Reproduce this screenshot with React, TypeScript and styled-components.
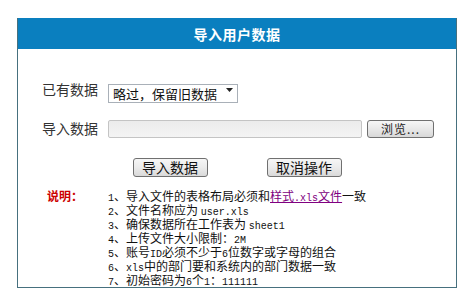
import styled, { createGlobalStyle } from 'styled-components'

const GlobalStyle = createGlobalStyle`
  html, body {
    margin: 0;
    padding: 0;
    background: #ffffff;
  }
  body {
    font-family: "Noto Sans CJK SC", "Liberation Sans", sans-serif;
    color: #222;
  }
`

const Page = styled.div`
  padding: 18px 7px 13px 17px;
`

const Panel = styled.div`
  width: 440px;
  height: 270px;
  box-sizing: border-box;
  border: 1px solid #46707e;
  border-top: none;
  background: #fff;
  display: flex;
  flex-direction: column;
  overflow: hidden;
`

const Header = styled.div`
  flex-shrink: 0;
  height: 31px;
  margin: 0 -1px;
  background: #0a7fbf;
  color: #fff;
  font-size: 14px;
  font-weight: bold;
  display: flex;
  align-items: center;
  justify-content: center;
  letter-spacing: 0.5px;
`

const Body = styled.div`
  padding: 31px 0 0 24px;
  display: flex;
  flex-direction: column;
`

const FormRow = styled.div`
  display: flex;
  align-items: center;
  height: 19px;
  margin-bottom: 20px;
`

const Label = styled.div`
  width: 66px;
  font-size: 14px;
  color: #333;
  line-height: 19px;
`

const SelectWrap = styled.div`
  position: relative;
  width: 130px;
  height: 19px;
`

const Select = styled.select`
  appearance: none;
  width: 100%;
  height: 19px;
  box-sizing: border-box;
  border: 1px solid #a9b0b8;
  background: #fff;
  font-family: inherit;
  font-size: 13px;
  color: #111;
  padding: 0 0 0 4px;
  line-height: 17px;
  outline: none;
`

const Arrow = styled.svg`
  position: absolute;
  right: 5px;
  top: 8px;
  pointer-events: none;
`

const FileInput = styled.div`
  width: 254px;
  height: 18px;
  box-sizing: border-box;
  border: 1px solid #c4c4c4;
  border-radius: 2px;
  background: linear-gradient(#ececec, #f4f4f4);
`

const BrowseButton = styled.button`
  margin-left: 5px;
  width: 67px;
  height: 18px;
  box-sizing: border-box;
  border: 1px solid #707070;
  border-radius: 3px;
  background: linear-gradient(#f6f6f6 0%, #e8e8e8 50%, #d8d8d8 100%);
  font-family: inherit;
  font-size: 12px;
  color: #222;
  padding: 0;
  line-height: 16px;
  letter-spacing: 1px;
`

const Actions = styled.div`
  display: flex;
  justify-content: center;
  gap: 59px;
  margin: 0 0 12px -24px;
`

const ActionButton = styled.button`
  width: 75px;
  height: 19px;
  box-sizing: border-box;
  border: 1px solid #707070;
  border-radius: 3px;
  background: linear-gradient(#f6f6f6 0%, #ebebeb 50%, #d9d9d9 100%);
  font-family: inherit;
  font-size: 14px;
  color: #111;
  padding: 0;
  line-height: 17px;
`

const Notes = styled.div`
  display: flex;
  margin-left: 5px;
`

const NotesTitle = styled.div`
  width: 61px;
  color: #cc0000;
  font-weight: bold;
  font-size: 12px;
  line-height: 14px;
`

const NotesList = styled.ol`
  list-style: none;
  margin: 0;
  padding: 0;
  font-size: 12px;
  line-height: 14px;
  color: #111;
`

const Note = styled.li`
  height: 14px;
  white-space: nowrap;
`

const Mono = styled.span`
  font-family: "Liberation Mono", monospace;
  font-size: 10px;
  line-height: 0;
`

const Link = styled.a`
  color: #800080;
  text-decoration: underline;
`

const App = () => {
  return (
    <Page>
      <GlobalStyle />
      <Panel>
        <Header>导入用户数据</Header>
        <Body>
          <FormRow>
            <Label>已有数据</Label>
            <SelectWrap>
              <Select defaultValue="skip">
                <option value="skip">略过，保留旧数据</option>
                <option value="cover">覆盖旧数据</option>
              </Select>
              <Arrow width="7" height="4" viewBox="0 0 7 4">
                <path d="M0 0h7L3.5 4z" fill="#222" />
              </Arrow>
            </SelectWrap>
          </FormRow>
          <FormRow>
            <Label>导入数据</Label>
            <FileInput />
            <BrowseButton>浏览...</BrowseButton>
          </FormRow>
          <Actions>
            <ActionButton>导入数据</ActionButton>
            <ActionButton>取消操作</ActionButton>
          </Actions>
          <Notes>
            <NotesTitle>说明：</NotesTitle>
            <NotesList>
              <Note>
                <Mono>1</Mono>、导入文件的表格布局必须和
                <Link href="#">
                  样式<Mono>.xls</Mono>文件
                </Link>
                一致
              </Note>
              <Note>
                <Mono>2</Mono>、文件名称应为 <Mono>user.xls</Mono>
              </Note>
              <Note>
                <Mono>3</Mono>、确保数据所在工作表为 <Mono>sheet1</Mono>
              </Note>
              <Note>
                <Mono>4</Mono>、上传文件大小限制：<Mono>2M</Mono>
              </Note>
              <Note>
                <Mono>5</Mono>、账号<Mono>ID</Mono>必须不少于<Mono>6</Mono>位数字或字母的组合
              </Note>
              <Note>
                <Mono>6</Mono>、<Mono>xls</Mono>中的部门要和系统内的部门数据一致
              </Note>
              <Note>
                <Mono>7</Mono>、初始密码为<Mono>6</Mono>个<Mono>1</Mono>：<Mono>111111</Mono>
              </Note>
            </NotesList>
          </Notes>
        </Body>
      </Panel>
    </Page>
  )
}

export default App
